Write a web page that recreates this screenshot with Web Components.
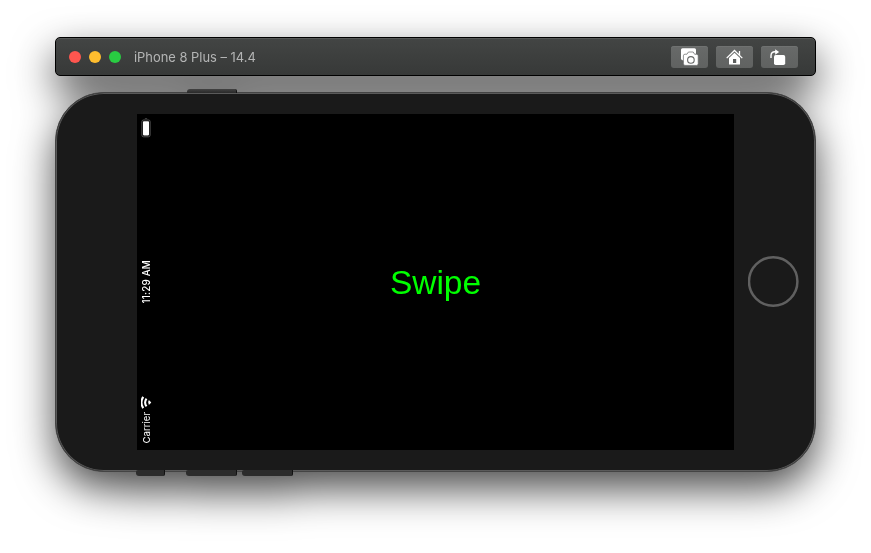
<!DOCTYPE html>
<html lang="en"><head><meta charset="utf-8"><title>Simulator</title>
<style>body{margin:0;background:#fff;width:871px;height:553px;overflow:hidden}</style></head><body>
<simulator-window>
  <title-bar slot="bar" label="iPhone 8 Plus – 14.4"></title-bar>
  <phone-frame><status-bar slot="status"></status-bar><swipe-label>Swipe</swipe-label></phone-frame>
</simulator-window>
<script>
const define=(name,html)=>customElements.define(name,class extends HTMLElement{
  constructor(){super();this.attachShadow({mode:'open'}).innerHTML=html;}
  connectedCallback(){const l=this.shadowRoot.querySelector('[data-label]');if(l)l.textContent=this.getAttribute('label');}
});
define('simulator-window',`<style>:host{display:flex;flex-direction:column;gap:16px;box-sizing:border-box;width:871px;height:553px;padding:37px 55px 0;filter:drop-shadow(0 17px 20px rgba(0,0,0,.7))}</style><slot name="bar"></slot><slot></slot>`);
define('tool-button',`<style>:host{display:flex;width:37px;height:22px;border-radius:3px;background:linear-gradient(#686a69,#606261);box-shadow:inset 0 1px #707271}</style><slot></slot>`);
define('title-bar',`<style>
:host{display:flex;align-items:center;box-sizing:border-box;width:761px;height:39px;padding:0 17px 0 13px;border:1px solid #000;border-radius:5px;background:linear-gradient(#434544,#373938);box-shadow:inset 0 1px #565857}
.lights{display:flex;gap:8px}.lights i{width:12px;height:12px;border-radius:50%}
span{margin-left:13px;padding-top:2px;font:12.9px/20px Inter,sans-serif;color:#b4b5b5;white-space:nowrap;flex:1}
.tools{display:flex;gap:8px}svg{display:block}
</style>
<div class="lights"><i style="background:#ff564f"></i><i style="background:#ffbd2e"></i><i style="background:#29cc42"></i></div><span data-label></span>
<div class="tools">
<tool-button><svg width="37" height="22" viewBox="0 0 37 22"><path d="M11.5 2.2h12q1.5 0 1.5 1.5v4l-1 1H17l-4 2v4h-.6l-2.4-1.5V3.7q0-1.5 1.5-1.5z" fill="#fff"/><path d="M14 8.2h2l1.4-2.2h4.8l1.4 2.2h2q1.6 0 1.6 1.6v8q0 1.6-1.6 1.6H14q-1.6 0-1.6-1.6v-8q0-1.6 1.6-1.6z" fill="#fff" stroke="#646665" stroke-width=".7"/><circle cx="19.9" cy="13.9" r="3.3" fill="#fff" stroke="#676968" stroke-width="1.1"/></svg></tool-button>
<tool-button><svg width="37" height="22" viewBox="0 0 37 22"><path d="M10.7 12.1 18.5 4.5l7.8 7.6M23.5 5v4" fill="none" stroke="#fff" stroke-width="1.3"/><path d="m18.5 6.8 5.5 5.3V18q0 .5-.6.5h-9.8q-.6 0-.6-.5v-5.9z" fill="#fff"/><path d="M17 13h3.2v4H17z" fill="#5d5f5e"/></svg></tool-button>
<tool-button><svg width="37" height="22" viewBox="0 0 37 22"><rect x="13" y="9" width="11.2" height="10" rx="1.7" fill="#fff"/><path d="M10 12V9.8q0-4 4-4h2" fill="none" stroke="#fff" stroke-width="1.4"/><path d="m14.2 3.2 3.9 2.7-3.9 2.8z" fill="#fff"/></svg></tool-button>
</div>`);
define('phone-frame',`<style>
:host{display:grid;grid-template-columns:80px 597px 1fr;position:relative;box-sizing:border-box;width:761px;height:380px;padding:21px 1px;border:1px solid #444;border-radius:49px;background:#1a1a1a;box-shadow:inset 0 0 0 1px #5a5a5a}
.screen{display:grid;grid-template-columns:20px 1fr 20px;height:336px;background:#000}
.home{align-self:center;margin:0 0 1px 14px}svg{display:block}
b{position:absolute;height:4px;background:linear-gradient(#424242,#292929);border-right:1px solid #111;box-sizing:border-box}
.up{top:-4px;border-radius:3px 2px 0 0}.down{bottom:-5px;height:6px;border-radius:2px 0 2px 3px;background:#2c2c2c}
</style><b class="up" style="left:131px;width:50px"></b><b class="down" style="left:80px;width:29px"></b><b class="down" style="left:130px;width:51px"></b><b class="down" style="left:186px;width:51px"></b>
<i></i><div class="screen"><slot name="status"></slot><slot></slot></div><svg class="home" width="51" height="51" viewBox="0 0 51 51"><circle cx="25.2" cy="25.5" r="24.2" fill="none" stroke="#606060" stroke-width="2.5"/></svg>`);
define('status-bar',`<style>
:host{display:grid;grid-template-rows:1fr auto 1fr;justify-items:center;box-sizing:border-box;width:19px;height:336px;padding:4px 0 6px;color:#fff;font:9.6px/12px Inter,sans-serif}
.battery{display:block;margin-right:2px}svg{display:block}.t{writing-mode:vertical-rl;transform:rotate(180deg);white-space:nowrap}
.time{font-weight:500;font-size:9.8px;letter-spacing:.2px;margin-top:2px}.carrier{display:flex;flex-direction:column;align-items:center;align-self:end;gap:3px;padding-bottom:1px}
</style>
<svg class="battery" width="12" height="21" viewBox="0 .8 12 21"><path d="M4.5 1.8q1.5-1.6 3 0z" fill="#666"/><rect x="1.9" y="2.8" width="8.2" height="16.8" rx="1.6" fill="none" stroke="#555" stroke-width="1"/><rect x="3" y="4" width="6" height="14.2" rx=".8" fill="#fff"/></svg>
<span class="t time">11:29 AM</span>
<div class="carrier"><svg width="11" height="13" viewBox="0 0 10 12"><path d="M2 11.2Q-1.4 6 2 .8M5 9.6Q2.4 6 5 2.4" fill="none" stroke="#fff" stroke-width="1.9"/><path d="M9.4 6 7.2 8.2Q5.5 6 7.2 3.8z" fill="#fff"/></svg><span class="t">Carrier</span></div>`);
define('swipe-label',`<style>:host{display:flex;align-items:center;justify-content:center;padding-top:2px;font:33.5px/40px "Liberation Sans",Arial,sans-serif;color:#0f0}</style><slot></slot>`);
</script></body></html>
